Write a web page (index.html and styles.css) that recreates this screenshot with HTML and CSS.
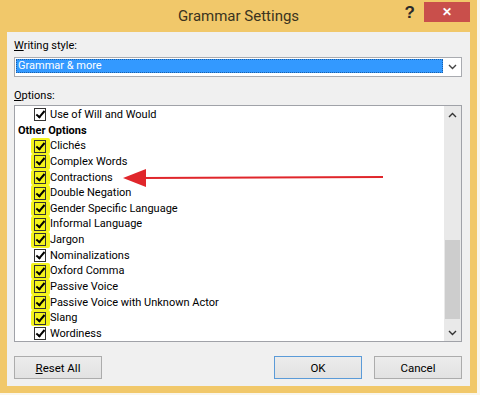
FILE: index.html
```html
<!DOCTYPE html>
<html>
<head>
    <title>Grammar Settings</title>
    <link rel="stylesheet" href="styles.css">
</head>
<body>

<div class="dialog">
    <div class="titlebar">
        <span></span>
        <span class="title">Grammar Settings</span>
        <span class="controls">
            <span class="help">?</span>
            <span class="close">&#x2715;</span>
        </span>
    </div>

    <div class="panel">
        <div class="label"><u>W</u>riting style:</div>
        <div class="combo">
            <div class="combo-value"><span>Grammar &amp; more</span></div>
            <div class="combo-arrow">
                <svg width="9" height="6" viewBox="0 0 9 6"><path d="M1 1 L4.5 4.5 L8 1" fill="none" stroke="#444" stroke-width="1.4"/></svg>
            </div>
        </div>

        <div class="label label-options"><u>O</u>ptions:</div>
        <div class="listbox">
            <div class="items">
                <div class="row"><span class="mark"><span class="check"></span></span>Use of Will and Would</div>
                <div class="row header">Other Options</div>
                <div class="row"><span class="mark hl"><span class="check"></span></span>Clichés</div>
                <div class="row"><span class="mark hl"><span class="check"></span></span>Complex Words</div>
                <div class="row"><span class="mark hl"><span class="check"></span></span>Contractions</div>
                <div class="row"><span class="mark hl"><span class="check"></span></span>Double Negation</div>
                <div class="row"><span class="mark hl"><span class="check"></span></span>Gender Specific Language</div>
                <div class="row"><span class="mark hl"><span class="check"></span></span>Informal Language</div>
                <div class="row"><span class="mark hl"><span class="check"></span></span>Jargon</div>
                <div class="row"><span class="mark"><span class="check"></span></span>Nominalizations</div>
                <div class="row"><span class="mark hl"><span class="check"></span></span>Oxford Comma</div>
                <div class="row"><span class="mark hl"><span class="check"></span></span>Passive Voice</div>
                <div class="row"><span class="mark hl"><span class="check"></span></span>Passive Voice with Unknown Actor</div>
                <div class="row"><span class="mark hl"><span class="check"></span></span>Slang</div>
                <div class="row"><span class="mark"><span class="check"></span></span>Wordiness</div>
            </div>
            <div class="scrollbar">
                <div class="sb-btn">
                    <svg width="9" height="6" viewBox="0 0 9 6"><path d="M1 5 L4.5 1.5 L8 5" fill="none" stroke="#333" stroke-width="1.4"/></svg>
                </div>
                <div class="sb-track"><div class="sb-thumb"></div></div>
                <div class="sb-btn">
                    <svg width="9" height="6" viewBox="0 0 9 6"><path d="M1 1 L4.5 4.5 L8 1" fill="none" stroke="#333" stroke-width="1.4"/></svg>
                </div>
            </div>
            <svg class="arrow" width="262" height="20" viewBox="0 0 262 20">
                <line x1="20" y1="10" x2="260" y2="9" stroke="#e0262b" stroke-width="2.2"/>
                <polygon points="0,10 23,1 23,19" fill="#e0262b"/>
            </svg>
        </div>

        <div class="buttons">
            <button class="btn"><u>R</u>eset All</button>
            <div class="btn-group">
                <button class="btn btn-default">OK</button>
                <button class="btn">Cancel</button>
            </div>
        </div>
    </div>
</div>

</body>
</html>
```

FILE: styles.css
```css
body {
    margin: 0;
    background-color: #faf6ec;
    font-family: Roboto, "Noto Sans", sans-serif;
    font-size: 11px;
    color: #000;
}
.dialog {
    width: 477px;
    height: 393px;
    background-color: #f1c86a;
    padding: 0 7px 7px 7px;
    box-sizing: border-box;
}
.titlebar {
    height: 32px;
    display: grid;
    grid-template-columns: 1fr auto 1fr;
    align-items: start;
}
.title {
    font-size: 15px;
    color: #3a3320;
    line-height: 32px;
}
.controls {
    display: flex;
    justify-content: flex-end;
    align-items: flex-start;
}
.help {
    font-family: "Liberation Sans", sans-serif;
    font-weight: bold;
    font-size: 17px;
    color: #2a2a2a;
    margin: 3px 9px 0 0;
}
.close {
    width: 46px;
    height: 20px;
    margin-top: 2px;
    background-color: #c94f4b;
    color: #fff;
    font-size: 12px;
    font-weight: bold;
    text-align: center;
    line-height: 20px;
}
.panel {
    height: 354px;
    background-color: #f0f0f0;
    padding: 6px 8px 0 7px;
    box-sizing: border-box;
}
.label {
    line-height: 16px;
    height: 16px;
}
.label-options {
    margin-top: 11px;
}
.combo {
    margin-top: 3px;
    height: 20px;
    border: 1px solid #a9abb0;
    background-color: #fff;
    box-sizing: border-box;
    display: flex;
}
.combo-value {
    flex: 1;
    padding: 1px 0 1px 1px;
}
.combo-value span {
    display: block;
    height: 14px;
    background-color: #3399ff;
    border: 1px dotted #1a5fa8;
    box-sizing: border-box;
    color: #fff;
    line-height: 12px;
    padding-left: 1px;
}
.combo-arrow {
    width: 18px;
    display: flex;
    align-items: center;
    justify-content: center;
}
.listbox {
    position: relative;
    margin-top: 1px;
    height: 237px;
    border: 1px solid #a0a2a8;
    background-color: #fff;
    box-sizing: border-box;
    display: flex;
}
.items {
    flex: 1;
    overflow: hidden;
    padding-top: 1px;
}
.row {
    height: 15.65px;
    line-height: 15.65px;
    display: flex;
    align-items: center;
    white-space: nowrap;
}
.header {
    font-weight: bold;
    padding-left: 3px;
}
.mark {
    width: 19px;
    height: 100%;
    margin-left: 16px;
    display: flex;
    align-items: center;
    padding-left: 3px;
    box-sizing: border-box;
}
.hl {
    background-color: #f4f41c;
    border-radius: 2px;
}
.check {
    width: 13px;
    height: 13px;
    border: 1px solid #333;
    background-color: #fff;
    box-sizing: border-box;
    margin-right: 4px;
    position: relative;
}
.check::after {
    content: "";
    position: absolute;
    left: 3px;
    top: 0px;
    width: 3px;
    height: 7px;
    border: solid #000;
    border-width: 0 2px 2px 0;
    transform: rotate(40deg);
}
.hl .check {
    background-color: #f4f41c;
}
.scrollbar {
    width: 17px;
    background-color: #e9e9e9;
    display: flex;
    flex-direction: column;
}
.sb-btn {
    height: 17px;
    display: flex;
    align-items: center;
    justify-content: center;
}
.sb-track {
    flex: 1;
    padding-top: 117px;
    box-sizing: border-box;
}
.sb-thumb {
    height: 79px;
    margin: 0 1px;
    background-color: #cdcdcd;
}
.arrow {
    position: absolute;
    left: 108px;
    top: 62px;
}
.buttons {
    margin-top: 14px;
    display: flex;
    justify-content: space-between;
}
.btn-group {
    display: flex;
    gap: 12px;
}
.btn {
    width: 88px;
    height: 23px;
    font-family: Roboto, "Noto Sans", sans-serif;
    font-size: 11.5px;
    color: #000;
    background: linear-gradient(#ececec, #e2e2e2);
    border: 1px solid #acacac;
    padding: 0;
}
.btn-default {
    border-color: #5b9bd8;
}
```
